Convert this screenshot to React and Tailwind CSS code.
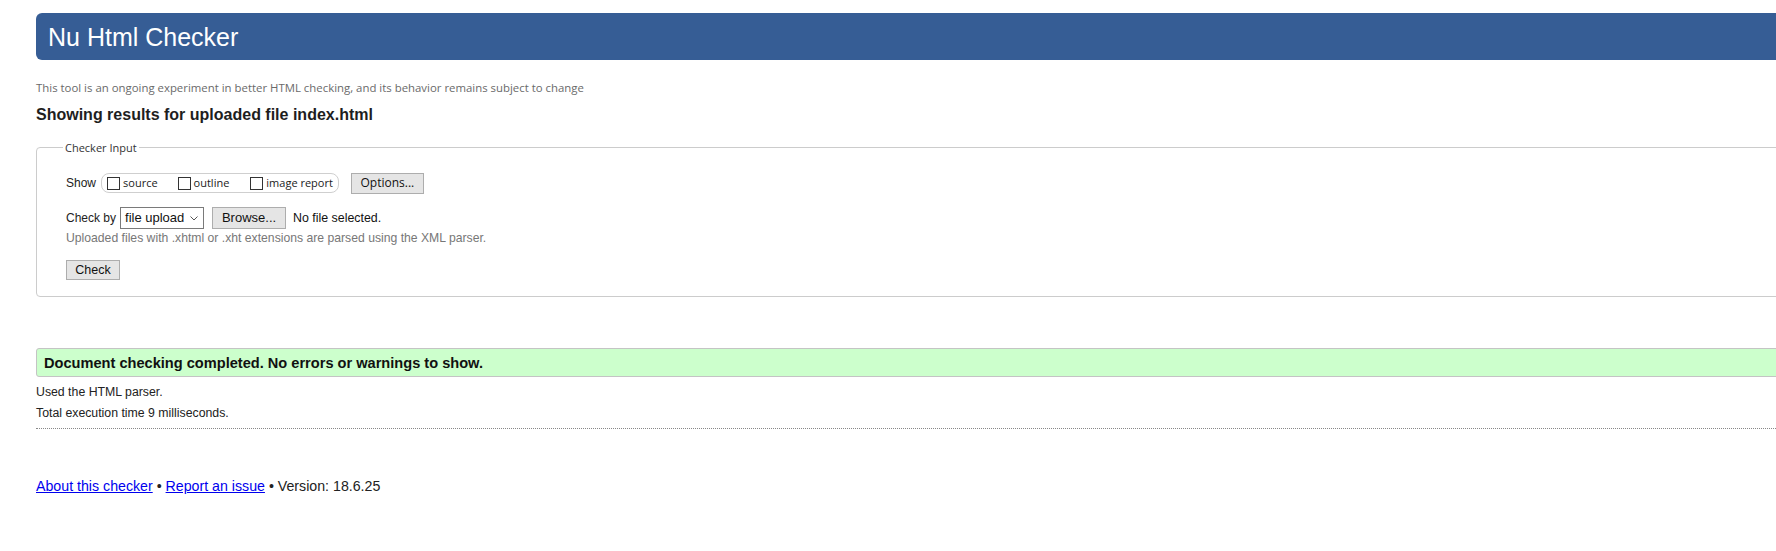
import React from "react";

const sans = "font-['Liberation_Sans',Arial,sans-serif]";
const ui = "font-['Open_Sans','Noto_Sans',sans-serif]";

function Box({ label }) {
  return (
    <label className="flex items-center">
      <input
        type="checkbox"
        className="appearance-none m-0 w-[13px] h-[13px] border border-[#333333] bg-white"
      />
      <span className={`${ui} ml-[3px] text-[11px] leading-[14px] text-[#222222]`}>{label}</span>
    </label>
  );
}

export default function App() {
  return (
    <div className={`w-full overflow-hidden bg-white ${sans} text-[#222222]`}>
      <div className="w-[2000px] pl-[36px] pb-[56px]">
        <h1 className="mt-[13px] h-[47px] rounded-[6px] bg-[#365d95] pl-[12px] flex items-center text-white text-[25px] leading-[30px] font-normal">
          Nu Html Checker
        </h1>

        <p className={`${ui} mt-[20px] text-[11.4px] leading-[16px] text-[#6a6a6a]`}>
          This tool is an ongoing experiment in better HTML checking, and its behavior remains subject to change
        </p>

        <h2 className="mt-[9px] text-[16px] leading-[20px] font-bold text-[#1e1e1e]">
          Showing results for uploaded file index.html
        </h2>

        <fieldset className="mt-[15px] border border-[#cccccc] rounded-[4px] pl-[26px] pt-[17px] pb-[15px]">
          <legend className={`${ui} px-[2px] text-[11px] leading-[15px] text-[#333333]`}>Checker Input</legend>
          <div className="pl-[3px]">
            <div className="flex items-center h-[22px]">
              <span className="text-[12px] leading-[14px]">Show</span>
              <div className="ml-[5px] h-[20px] flex items-center border border-[#cfcfcf] rounded-[8px] pl-[5px] pr-[5px]">
                <Box label="source" />
                <div className="w-[20px]" />
                <Box label="outline" />
                <div className="w-[21px]" />
                <Box label="image report" />
              </div>
              <button className={`${ui} ml-[12px] h-[21px] w-[73px] bg-[#e5e5e5] border border-[#adadad] text-[12px] leading-[14px] text-[#111111]`}>
                Options...
              </button>
            </div>

            <div className="mt-[13px] flex items-center h-[22px]">
              <span className="text-[12px] leading-[14px]">Check by</span>
              <div className="ml-[4px] h-[22px] w-[84px] flex items-center justify-between border border-[#7a7a7a] bg-white pl-[4px] pr-[5px]">
                <span className="text-[13px] leading-[16px] text-[#111111]">file upload</span>
                <svg width="8" height="5" viewBox="0 0 8 5" className="text-[#555555]">
                  <polyline points="0.5,0.5 4,4 7.5,0.5" fill="none" stroke="currentColor" strokeWidth="1" />
                </svg>
              </div>
              <button className="ml-[8px] h-[22px] w-[74px] bg-[#e5e5e5] border border-[#adadad] text-[13px] leading-[16px] text-[#111111]">
                Browse...
              </button>
              <span className="ml-[7px] text-[12.4px] leading-[16px] text-[#111111]">No file selected.</span>
            </div>

            <p className="mt-[1px] text-[12.2px] leading-[16px] text-[#777777]">
              Uploaded files with .xhtml or .xht extensions are parsed using the XML parser.
            </p>

            <button className="mt-[14px] h-[20px] w-[54px] bg-[#e5e5e5] border border-[#adadad] text-[12.5px] leading-[16px] text-[#111111]">
              Check
            </button>
          </div>
        </fieldset>

        <div className="mt-[51px] h-[29px] flex items-center rounded-[3px] border border-[#c4c4c4] bg-[#ccffcc] pl-[7px]">
          <span className="text-[14.6px] leading-[18px] font-bold text-[#111111]">
            Document checking completed. No errors or warnings to show.
          </span>
        </div>

        <p className="mt-[5px] text-[12.3px] leading-[21px]">Used the HTML parser.</p>
        <p className="text-[12.3px] leading-[21px]">Total execution time 9 milliseconds.</p>
        <div className="mt-[4px] border-t border-dotted border-[#888888]" />

        <p className="mt-[47px] text-[14.2px] leading-[20px]">
          <a href="#" className="text-[#0000ee] underline">About this checker</a>
          {" • "}
          <a href="#" className="text-[#0000ee] underline">Report an issue</a>
          {" • Version: 18.6.25"}
        </p>
      </div>
    </div>
  );
}
